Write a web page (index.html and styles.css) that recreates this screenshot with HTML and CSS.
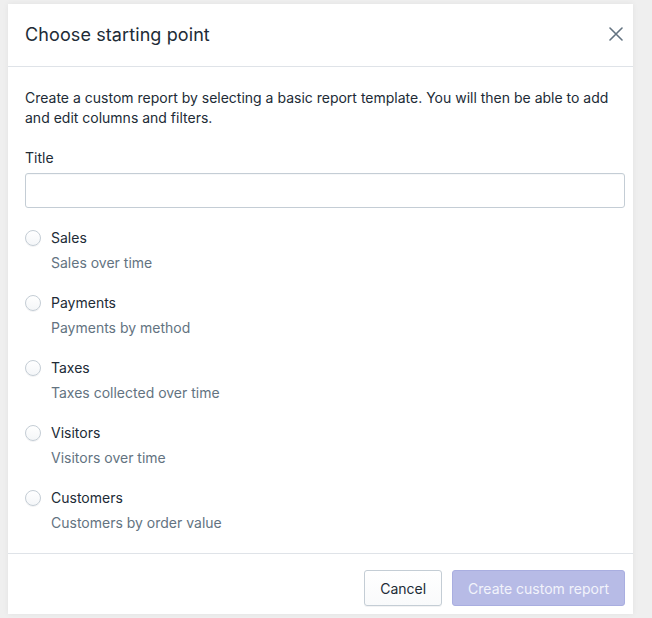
FILE: index.html
```html
<!DOCTYPE html>
<html lang="en">
<head>
  <meta charset="UTF-8" />
  <title>Choose starting point</title>
  <link rel="stylesheet" href="styles.css">
</head>
<body>
  <div class="modal">
    <div class="modal-header">
      <h2>Choose starting point</h2>
      <button class="close" aria-label="Close">
        <svg width="14" height="14" viewBox="0 0 14 14"><path d="M1 1L13 13M13 1L1 13" stroke="#637381" stroke-width="1.6" stroke-linecap="round"/></svg>
      </button>
    </div>

    <div class="modal-body">
      <p class="intro">Create a custom report by selecting a basic report template. You will then be able to add and edit columns and filters.</p>

      <label class="field-label" for="title-input">Title</label>
      <input type="text" id="title-input" class="text-input" />

      <div class="options">
        <label class="option">
          <span class="radio"></span>
          <span class="option-text">
            <span class="option-name">Sales</span>
            <span class="option-help">Sales over time</span>
          </span>
        </label>
        <label class="option">
          <span class="radio"></span>
          <span class="option-text">
            <span class="option-name">Payments</span>
            <span class="option-help">Payments by method</span>
          </span>
        </label>
        <label class="option">
          <span class="radio"></span>
          <span class="option-text">
            <span class="option-name">Taxes</span>
            <span class="option-help">Taxes collected over time</span>
          </span>
        </label>
        <label class="option">
          <span class="radio"></span>
          <span class="option-text">
            <span class="option-name">Visitors</span>
            <span class="option-help">Visitors over time</span>
          </span>
        </label>
        <label class="option">
          <span class="radio"></span>
          <span class="option-text">
            <span class="option-name">Customers</span>
            <span class="option-help">Customers by order value</span>
          </span>
        </label>
      </div>
    </div>

    <div class="modal-footer">
      <button class="btn">Cancel</button>
      <button class="btn btn-primary" disabled>Create custom report</button>
    </div>
  </div>
</body>
</html>
```

FILE: styles.css
```css
body {
  margin: 0;
  padding: 4px 19px 4px 8px;
  background: #efefef;
  font-family: Inter, 'Liberation Sans', sans-serif;
  color: #212b36;
}
.modal {
  width: 625px;
  height: 610px;
  background: #ffffff;
  box-shadow: 0 0 6px rgba(0,0,0,0.06);
  display: flex;
  flex-direction: column;
}
.modal-header {
  height: 62px;
  border-bottom: 1px solid #dfe3e8;
  display: flex;
  align-items: center;
  justify-content: space-between;
  padding: 0 10px 0 17px;
}
.modal-header h2 {
  margin: 0 0 2px;
  font-size: 18px;
  letter-spacing: 0.1px;
  font-weight: normal;
}
.close {
  border: none;
  background: none;
  padding: 0;
  width: 14px;
  height: 14px;
  margin-top: -3px;
  cursor: pointer;
}
.close svg { display: block; }
.modal-body {
  padding: 21px 8px 19px 17px;
  font-size: 14px;
  line-height: 20px;
}
.intro {
  margin: 0 0 20px;
}
.field-label {
  display: block;
  margin-bottom: 5px;
}
.text-input {
  display: block;
  box-sizing: border-box;
  width: 100%;
  height: 35px;
  border: 1px solid #c4cdd5;
  border-radius: 3px;
  box-shadow: inset 0 1px 0 rgba(99,115,129,0.05);
  margin: 0;
}
.options {
  display: flex;
  flex-direction: column;
  gap: 20px;
  margin-top: 20px;
}
.option {
  display: flex;
  gap: 10px;
}
.radio {
  width: 14px;
  height: 14px;
  margin-top: 2px;
  border: 1px solid #c4cdd5;
  border-radius: 50%;
  background: linear-gradient(#ffffff, #f4f6f8);
  box-shadow: 0 1px 0 rgba(22,29,37,0.05);
}
.option-text {
  display: flex;
  flex-direction: column;
  gap: 5px;
}
.option-help {
  color: #637381;
}
.modal-footer {
  margin-top: auto;
  border-top: 1px solid #dfe3e8;
  padding: 16px 8px 8px;
  display: flex;
  justify-content: flex-end;
  gap: 10px;
}
.btn {
  height: 36px;
  padding: 0 15px;
  font-family: inherit;
  font-size: 14px;
  color: #212b36;
  background: linear-gradient(#ffffff, #f9fafb);
  border: 1px solid #c4cdd5;
  border-radius: 3px;
  box-shadow: 0 1px 0 rgba(22,29,37,0.05);
}
.btn-primary {
  color: #f2f3fb;
  background: #b7bbe6;
  border-color: #a9aee0;
  box-shadow: none;
}
```
